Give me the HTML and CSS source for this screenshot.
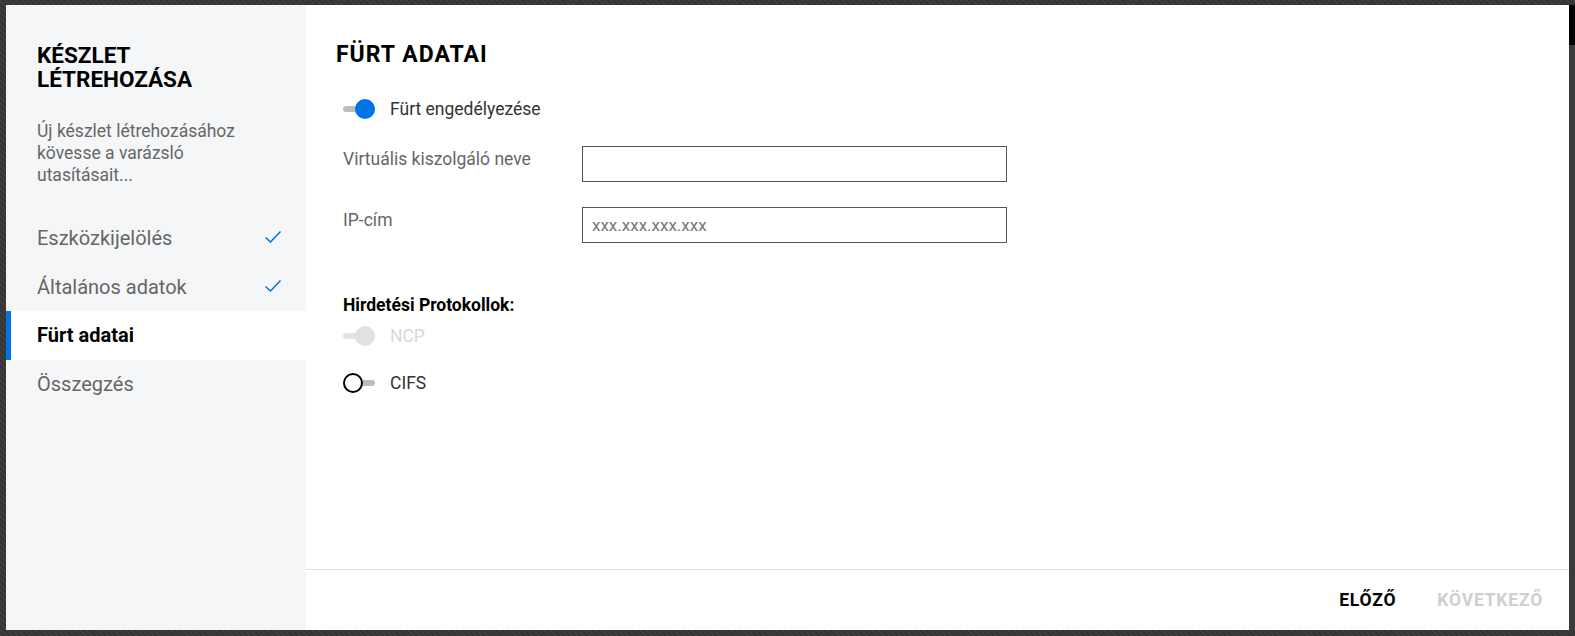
FILE: index.html
```html
<!DOCTYPE html>
<html lang="hu">

<head>
    <meta charset="UTF-8">
    <meta name="viewport" content="width=device-width, initial-scale=1.0">
    <title>Készlet létrehozása</title>
    <link rel="stylesheet" href="styles.css">
</head>

<body>

    <div class="modal">
        <aside class="sidebar">
            <h1 class="side-title">KÉSZLET LÉTREHOZÁSA</h1>
            <p class="side-desc">Új készlet létrehozásához kövesse a varázsló utasításait...</p>
            <ul class="steps">
                <li class="step done">Eszközkijelölés
                    <svg class="check" width="18" height="14" viewBox="0 0 18 14"><path d="M1.5 7.5 L6.5 12 L16.5 1.5" fill="none" stroke="#0073e6" stroke-width="1.6"/></svg>
                </li>
                <li class="step done">Általános adatok
                    <svg class="check" width="18" height="14" viewBox="0 0 18 14"><path d="M1.5 7.5 L6.5 12 L16.5 1.5" fill="none" stroke="#0073e6" stroke-width="1.6"/></svg>
                </li>
                <li class="step active">Fürt adatai</li>
                <li class="step">Összegzés</li>
            </ul>
        </aside>

        <main class="content">
            <div class="form">
                <h2 class="form-title">FÜRT ADATAI</h2>

                <div class="toggle-row">
                    <span class="toggle on"><span class="track"></span><span class="knob"></span></span>
                    <span class="toggle-label">Fürt engedélyezése</span>
                </div>

                <div class="field">
                    <label class="field-label">Virtuális kiszolgáló neve</label>
                    <input class="field-input" type="text">
                </div>
                <div class="field">
                    <label class="field-label">IP-cím</label>
                    <input class="field-input" type="text" placeholder="xxx.xxx.xxx.xxx">
                </div>

                <h3 class="group-title">Hirdetési Protokollok:</h3>
                <div class="toggle-row proto">
                    <span class="toggle disabled"><span class="track"></span><span class="knob"></span></span>
                    <span class="toggle-label muted">NCP</span>
                </div>
                <div class="toggle-row proto">
                    <span class="toggle off"><span class="track"></span><span class="knob"></span></span>
                    <span class="toggle-label">CIFS</span>
                </div>
            </div>

            <div class="footer">
                <button class="btn">ELŐZŐ</button>
                <button class="btn" disabled>KÖVETKEZŐ</button>
            </div>
        </main>
        <div class="scroll"><div class="thumb"></div></div>
    </div>

</body>

</html>
```

FILE: styles.css
```css
body {
    margin: 0;
    height: 636px;
    overflow: hidden;
    font-family: Roboto, "Liberation Sans", sans-serif;
    background-color: #3a3a3a;
    background-image: repeating-linear-gradient(45deg,
            #3d3d3d 0px,
            #3d3d3d 2px,
            #343434 2px,
            #343434 4px);
}

.modal {
    display: flex;
    margin: 5px 0 0 6px;
    height: 625px;
}

/* left column with the wizard steps */
.sidebar {
    width: 300px;
    flex-shrink: 0;
    background-color: #f5f6f8;
    padding-top: 38px;
}

.side-title {
    margin: 0 0 0 31px;
    font-size: 22.5px;
    line-height: 24px;
    font-weight: 700;
    color: #000;
    width: 200px;
}

.side-desc {
    margin: 29px 0 0 31px;
    width: 230px;
    font-size: 17.5px;
    line-height: 22px;
    color: #666;
}

.steps {
    list-style: none;
    margin: 28px 0 0;
    padding: 0;
}

.step {
    display: flex;
    align-items: center;
    justify-content: space-between;
    height: 48.5px;
    padding: 0 24px 0 26px;
    font-size: 20px;
    color: #666;
    border-left: 5px solid transparent;
}

.step.active {
    background-color: #fff;
    border-left-color: #0073e6;
    color: #000;
    font-weight: 700;
}

.check {
    margin-top: -2px;
}

/* right column */
.content {
    flex: 1;
    display: flex;
    flex-direction: column;
    background-color: #fff;
}

.form {
    flex: 1;
    padding: 36px 0 0 30px;
}

.form-title {
    margin: 0;
    font-size: 23px;
    line-height: 28px;
    letter-spacing: 1px;
    font-weight: 700;
    color: #000;
}

.toggle-row {
    display: flex;
    align-items: center;
    gap: 15px;
    margin: 28px 0 0 7px;
    height: 24px;
    font-size: 17.5px;
}

.toggle {
    position: relative;
    display: inline-block;
    width: 32px;
    height: 20px;
}

.track {
    position: absolute;
    left: 0;
    right: 0;
    top: 7px;
    height: 6px;
    border-radius: 3px;
    background-color: #bdbdbd;
}

.knob {
    position: absolute;
    top: 0;
    width: 20px;
    height: 20px;
    border-radius: 50%;
    box-sizing: border-box;
}

.toggle.on .knob {
    right: 0;
    background-color: #0073e6;
}

.toggle.disabled .track,
.toggle.disabled .knob {
    background-color: #e2e2e2;
}

.toggle.disabled .knob {
    right: 0;
}

.toggle.off .knob {
    left: 0;
    background-color: #fff;
    border: 2px solid #000;
}

.toggle-label {
    color: #333;
}

.toggle-label.muted {
    color: #d8d8d8;
}

.field {
    display: flex;
    align-items: flex-start;
    margin: 25px 0 0 7px;
}

.field + .field {
    margin-top: 25px;
}

.field-label {
    width: 239px;
    padding-top: 2px;
    font-size: 17.5px;
    line-height: 22px;
    color: #666;
}

.field-input {
    width: 425px;
    height: 36px;
    box-sizing: border-box;
    border: 1px solid #555;
    border-radius: 0;
    padding: 0 9px;
    font-family: Roboto, "Liberation Sans", sans-serif;
    font-size: 17px;
    color: #333;
    outline: none;
}

.field-input::placeholder {
    color: #777;
}

.group-title {
    margin: 51px 0 0 7px;
    font-size: 17.5px;
    line-height: 22px;
    font-weight: 700;
    color: #000;
}

.group-title + .toggle-row {
    margin-top: 8px;
}

.toggle-row.proto + .toggle-row.proto {
    margin-top: 23px;
}

.footer {
    display: flex;
    justify-content: flex-end;
    align-items: center;
    gap: 17px;
    height: 60px;
    padding-right: 14px;
    border-top: 1px solid #e0e0e0;
}

.btn {
    border: none;
    background: none;
    padding: 6px 12px;
    font-family: Roboto, "Liberation Sans", sans-serif;
    font-size: 17.5px;
    font-weight: 700;
    letter-spacing: 0.8px;
    color: #000;
    cursor: pointer;
}

.btn:disabled {
    color: #cfcfcf;
    cursor: default;
}

.scroll {
    width: 6px;
    flex-shrink: 0;
    background-color: #3a3a3a;
}

.thumb {
    height: 40px;
    background-color: #000;
}
```
